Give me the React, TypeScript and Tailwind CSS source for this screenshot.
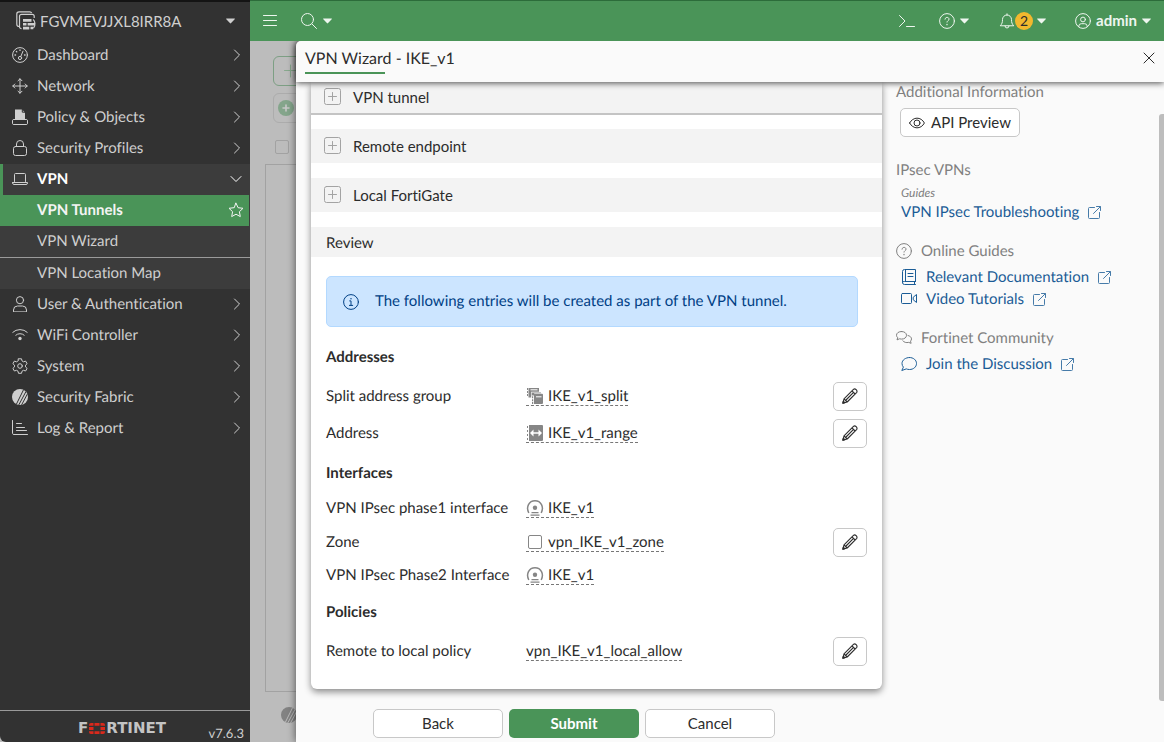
import React from "react";

type IconProps = { className?: string };

function Svg({ className = "", children, w = 16, h = 16, sw = 1 }: { className?: string; children: React.ReactNode; w?: number; h?: number; sw?: number }) {
  return (
    <svg
      aria-hidden="true"
      width={w}
      height={h}
      viewBox={`0 0 ${w} ${h}`}
      fill="none"
      stroke="currentColor"
      strokeWidth={sw}
      strokeLinecap="round"
      strokeLinejoin="round"
      className={`shrink-0 ${className}`}
    >
      {children}
    </svg>
  );
}

const DashboardIcon = () => (
  <Svg>
    <circle cx="8" cy="8" r="7.4" />
    <circle cx="8" cy="11" r="1.6" />
    <path d="M8.8 9.5 11 4.2" />
    <path d="M3 8h.6M12.5 8h.6M4.4 4.5l.4.4M8 3v.4" strokeWidth="1.3" />
  </Svg>
);
const NetworkIcon = () => (
  <Svg>
    <path d="M8 .8v14.4M.8 8h14.4M6 2.8l2-2 2 2M6 13.2l2 2 2-2M2.8 6l-2 2 2 2M13.2 6l2 2-2 2" />
  </Svg>
);
const PolicyIcon = () => (
  <Svg>
    <path d="M3 .5h7l3 3V11H3z" fill="currentColor" stroke="none" />
    <path d="M10.3 0v3.2h3" stroke="#323232" />
    <path d="M3 10.5H1.2l-.7.7v3.6l.7.7h13.6l.7-.7v-3.6l-.7-.7H13" />
  </Svg>
);
const LockIcon = () => (
  <Svg>
    <rect x="1.5" y="6.5" width="13" height="9" rx="2" />
    <path d="M4.5 6.5V4a3.5 3.5 0 0 1 7 0v2.5" />
  </Svg>
);
const LaptopIcon = () => (
  <Svg>
    <path d="M2.500 10.500v-7a1 1 0 0 1 1-1h9a1 1 0 0 1 1 1v7" />
    <path d="M.5 11.500h15v.5a1.500 1.500 0 0 1-1.500 1.500H2A1.500 1.500 0 0 1 .5 12z" />
  </Svg>
);
const UserIcon = () => (
  <Svg>
    <circle cx="8" cy="4.2" r="3.6" />
    <path d="M1.5 15.5V14a4 4 0 0 1 4-4h5a4 4 0 0 1 4 4v1.500z" />
  </Svg>
);
const WifiIcon = () => (
  <Svg>
    <path d="M.8 5.300a10.500 10.500 0 0 1 14.400 0M3.800 8.200a6.200 6.200 0 0 1 8.400 0" />
    <circle cx="8" cy="11.500" r="1.7" fill="currentColor" stroke="none" />
  </Svg>
);
const GearIcon = () => (
  <Svg>
    <path d="M6.500.8h3l.5 2.100 1.500.9 2.100-.7 1.500 2.600-1.600 1.500v1.700l1.600 1.500-1.500 2.600-2.100-.7-1.500.9-.5 2.100h-3L6 13.200l-1.500-.9-2.100.7-1.500-2.600 1.600-1.500V7.200L.9 5.700l1.500-2.600 2.100.7L6 2.900z" />
    <circle cx="8" cy="8" r="2.3" />
  </Svg>
);
const FabricIcon = ({ cut = "#323232" }: { cut?: string }) => (
  <Svg>
    <circle cx="8" cy="8" r="8" fill="currentColor" stroke="none" />
    <path d="M4.5 15 11.500.8M7 15.500 14 2.500M9.800 15.500 15.400 5" stroke={cut} />
  </Svg>
);
const ReportIcon = () => (
  <Svg>
    <path d="M.5.5v13A1.500 1.500 0 0 0 2 14.500h13.500M4.500 3.500h5M4.500 7.500h8M4.500 10.500h10" />
  </Svg>
);
const DeviceIcon = () => (
  <svg aria-hidden="true" width="20" height="20" viewBox="0 0 20 20" fill="none" stroke="currentColor" strokeWidth="1.2" className="shrink-0">
    <path d="M3 15.500A2.300 2.300 0 0 1 .8 13.200V3A2.200 2.200 0 0 1 3 .8h10.500A2.200 2.200 0 0 1 15.700 2" />
    <path d="M5.500 17.700a2 2 0 0 1-2-2V5.300a2 2 0 0 1 2-2h10.700a2 2 0 0 1 2 2V7" />
    <path d="M7 8h8.500v2.700H7zM7 11.900h3.500v2.700H7zM11.600 11.900H19v2.700h-7.400zM7 15.800h6.300v2.700H7zM14.500 15.800h2.800v2.500h-2.800z" fill="currentColor" stroke="none" />
    <path d="M17 8.500c2.200 1.500 2.800 6 .5 8.500" />
  </svg>
);
const Caret = ({ className = "" }: IconProps) => (
  <svg aria-hidden="true" width="9" height="6" viewBox="0 0 9 6" fill="currentColor" className={`shrink-0 ${className}`}>
    <path d="M.6.5h7.800c.5 0 .6.400.3.800L5.100 5.100a.8.8 0 0 1-1.200 0L.3 1.300C0 .9.1.5.6.5z" />
  </svg>
);
const ChevronRight = () => (
  <Svg w={8} h={12}>
    <path d="M1.500 1 6.500 6l-5 5" />
  </Svg>
);
const ChevronDown = () => (
  <Svg w={12} h={8}>
    <path d="M1 1.500 6 6.500l5-5" />
  </Svg>
);
const StarIcon = () => (
  <Svg>
    <path d="m8 1.200 2.100 4.500 4.900.6-3.600 3.400.9 4.900L8 12.200l-4.300 2.400.9-4.900L1 6.300l4.900-.6z" />
  </Svg>
);
const HelpIcon = () => (
  <Svg>
    <circle cx="8" cy="8" r="7.4" />
    <path d="M6 6.200c0-2.500 4-2.500 4 0 0 1.400-2 1.500-2 2.900" />
    <path d="M8 11.400v.3" strokeWidth="1.3" />
  </Svg>
);
const InfoIcon = () => (
  <Svg>
    <circle cx="8" cy="8" r="7.4" />
    <path d="M6.700 6.900H8v4.400M6.400 11.400h3.300" />
    <path d="M8 4.600v.2" strokeWidth="1.4" />
  </Svg>
);
const EyeIcon = () => (
  <Svg>
    <path d="M.6 8C4 1.500 12 1.500 15.400 8 12 14.500 4 14.500.6 8z" />
    <circle cx="8" cy="8" r="3" />
  </Svg>
);
const ExternalIcon = () => (
  <Svg w={13} h={13} className="opacity-80">
    <path d="M6.500 1.500h-5a1 1 0 0 0-1 1v9a1 1 0 0 0 1 1h9a1 1 0 0 0 1-1v-5M8.500.5h4v4M12.300.7 5.500 7.500" />
  </Svg>
);
const BookIcon = () => (
  <Svg>
    <path d="M14.500 12.500V.5h-11a2 2 0 0 0-2 2v11a2 2 0 0 0 2 2h11M14.500 12.500h-11a1.500 1.500 0 0 0-2 1M4.500.5v12M7 4.500h5M7 7.500h5M13.500 12.500v3" />
  </Svg>
);
const VideoIcon = () => (
  <Svg>
    <rect x=".5" y="2.5" width="10" height="10" rx="1" />
    <path d="m12.500 6 3-2.500v8l-3-2.500z" />
  </Svg>
);
const ChatsIcon = () => (
  <Svg>
    <path d="M5.500 1.500c3 0 5 1.600 5 3.800s-2 3.800-5 3.800c-.8 0-1.500-.1-2.100-.3L1 9.900l.7-2.200C1 7 .5 6.200.5 5.300c0-2.200 2-3.800 5-3.800z" />
    <path d="M12 5.500c2 .5 3.500 1.700 3.500 3.400 0 .9-.4 1.600-1 2.200l.6 2.200-2.400-.9c-2.400.6-4.700-.1-5.900-1.600" />
  </Svg>
);
const ChatIcon = () => (
  <Svg>
    <path d="M8.500 1.500c4 0 7 2.600 7 6s-3 6-7 6c-1.200 0-2.300-.2-3.200-.6L.8 14.500l1.600-3.400C1.500 10.100 1 8.900 1 7.500c0-3.400 3.500-6 7.500-6z" />
  </Svg>
);
const PencilIcon = () => (
  <Svg sw={1.100}>
    <path d="M.9 15.100 2 10.800 11.700 1.200c1.500-1 4 1.300 3.100 3.100L5.200 14zM2 10.800 5.200 14M10 2.900 13.100 6M4 12 11.300 4.700" />
    <path d="m.8 15.200.5-2 1.500 1.500z" fill="currentColor" />
  </Svg>
);
const PlusBoxIcon = () => (
  <Svg w={18} h={18} className="text-[#a3a3a3]">
    <rect x=".5" y=".5" width="16" height="16" rx="2" />
    <path d="M8.500 4.500v8M4.500 8.500h8" />
  </Svg>
);

function EntrySvg({ children, sw = 1 }: { children: React.ReactNode; sw?: number }) {
  return (
    <svg aria-hidden="true" width="18" height="16" viewBox="-1 0 18 16" fill="none" stroke="currentColor" strokeWidth={sw} className="shrink-0 text-[#868686]">
      {children}
    </svg>
  );
}
const GroupIcon = () => (
  <EntrySvg>
    <g fill="currentColor" stroke="none">
      <path d="M1.500 0H12v3.800H1.500zM0 0h1v2H0zM0 3h1v2H0zM0 6h1v2H0zM1.500 3h2.700v6.500H1.500zM4.800 4.500H14V5.200H7.200v2.300H4.800z" />
      <path d="M7 5.800h8a1 1 0 0 1 1 1V15a1 1 0 0 1-1 1H7zM5 8.300h1.200v2H5zM5 11.300h1.200v2H5zM5 14h1.200v2H5z" />
    </g>
    <path d="M3.500 1.800h7M9 8.800h5.500" stroke="#fff" />
  </EntrySvg>
);
const RangeIcon = () => (
  <EntrySvg>
    <path d="M2 0h13a1 1 0 0 1 1 1v14a1 1 0 0 1-1 1H2zM0 1h1v2H0zM0 5h1v2H0zM0 9h1v2H0zM0 13h1v2H0z" fill="currentColor" stroke="none" />
    <path d="m3 8 3.500-3.500v2.700h5V4.500L15 8l-3.500 3.500V8.800h-5v2.700z" fill="#fff" stroke="none" />
  </EntrySvg>
);
const TunnelIcon = () => (
  <EntrySvg sw={1.500}>
    <path d="M1.800 13C-1.300 7 2 .8 8 .8S17.300 7 14.200 13" />
    <circle cx="8" cy="7.800" r="2.200" fill="currentColor" stroke="none" />
    <path d="M4.500 12.600h7M3.500 15.200h9" strokeWidth="1.200" />
  </EntrySvg>
);
const ZoneIcon = () => (
  <EntrySvg>
    <rect x="1.500" y="1.500" width="13" height="13" rx="1.500" />
  </EntrySvg>
);

const topNav = [
  { label: "Dashboard", icon: <DashboardIcon /> },
  { label: "Network", icon: <NetworkIcon /> },
  { label: "Policy & Objects", icon: <PolicyIcon /> },
  { label: "Security Profiles", icon: <LockIcon /> },
];
const bottomNav = [
  { label: "User & Authentication", icon: <UserIcon /> },
  { label: "WiFi Controller", icon: <WifiIcon /> },
  { label: "System", icon: <GearIcon /> },
  { label: "Security Fabric", icon: <FabricIcon /> },
  { label: "Log & Report", icon: <ReportIcon /> },
];

function NavItem({ label, icon }: { label: string; icon: React.ReactNode }) {
  return (
    <a href="#" className="flex h-[31px] items-center gap-[9px] pr-[9px] pb-px pl-3">
      {icon}
      <span className="flex-1">{label}</span>
      <ChevronRight />
    </a>
  );
}

function FortinetLogo() {
  return (
    <div className="flex items-center gap-px font-['DejaVu_Sans',sans-serif] text-[15px] leading-none font-bold text-[#c4c4c4]">
      <span>F</span>
      <svg aria-hidden="true" width="16" height="11" viewBox="0 0 16 11" fill="#da291c">
        <path d="M5.500 0h5v2.800h-5zM5.500 8.200h5V11h-5zM0 4h4.500v3H0zM11.500 4H16v3h-4.500zM2 0h2.500v2.800H0V2a2 2 0 0 1 2-2zM11.500 0H14a2 2 0 0 1 2 2v.8h-4.500zM0 8.200h4.500V11H2a2 2 0 0 1-2-2zM11.500 8.200H16V9a2 2 0 0 1-2 2h-2.500z" />
      </svg>
      <span>RTINET</span>
    </div>
  );
}

function Sidebar() {
  return (
    <nav aria-label="Main" className="flex w-[250px] shrink-0 flex-col rounded-bl-md border-t-2 border-t-[#141414] bg-[#323232] text-[#cfcfcf]">
      <button type="button" className="flex h-[38px] items-center gap-1 pr-[15px] pb-px pl-4 text-left">
        <DeviceIcon />
        <span className="flex-1">FGVMEVJJXL8IRR8A</span>
        <Caret />
      </button>
      {topNav.map((n) => (
        <NavItem key={n.label} {...n} />
      ))}
      <div className="bg-[#3c3c3c]">
        <a href="#" className="flex h-[31px] items-center gap-[9px] border-l-3 border-[#4a9458] pr-2 pb-px pl-[9px] font-bold text-white">
          <span className="flex text-[#cfcfcf]">
            <LaptopIcon />
          </span>
          <span className="flex-1">VPN</span>
          <ChevronDown />
        </a>
        <a href="#" aria-current="page" className="mr-px flex h-[31px] items-center bg-[#4a9458] pr-[5px] pb-px pl-[37px] font-bold text-[#f4f4f4]">
          <span className="flex-1">VPN Tunnels</span>
          <StarIcon />
        </a>
        <a href="#" className="flex h-[31px] items-center pb-px pl-[37px]">VPN Wizard</a>
        <a href="#" className="flex h-[32px] items-center border-t border-[#9a9a9a] pb-px pl-[37px]">VPN Location Map</a>
      </div>
      {bottomNav.map((n) => (
        <NavItem key={n.label} {...n} />
      ))}
      <div className="mt-auto flex h-[32px] items-center border-t border-[#9a9a9a] pt-[3px] pr-[6px]">
        <div className="flex-1" />
        <FortinetLogo />
        <div className="flex-1 self-end text-right text-[13px] leading-[18px]">v7.6.3</div>
      </div>
    </nav>
  );
}

function TopBar() {
  return (
    <header className="flex h-[41px] shrink-0 items-center border-t border-[#2c6c3a] bg-[#4a9458] pr-[13px] pb-px pl-[13px] text-[#eef6ef]">
      <button type="button" aria-label="Toggle menu">
        <Svg w={14} h={12}>
          <path d="M.5.500h13M.5 5.500h13M.5 10.500h13" />
        </Svg>
      </button>
      <button type="button" aria-label="Search" className="ml-6 flex items-center gap-[6px]">
        <Svg>
          <circle cx="6.5" cy="6.5" r="6" />
          <path d="m11 11 4.500 4.500" />
        </Svg>
        <Caret />
      </button>
      <div className="flex-1" />
      <button type="button" aria-label="CLI console">
        <Svg>
          <path d="m.5 2.500 5.500 5.500L.5 13.500M7.500 13.500h8" />
        </Svg>
      </button>
      <button type="button" aria-label="Help" className="ml-6 flex items-center gap-[5px]">
        <HelpIcon />
        <Caret />
      </button>
      <button type="button" aria-label="Notifications" className="ml-[30px] flex items-center">
        <Svg>
          <path d="M1.500 12.500c1.500-1.500 2-3 2-6a4.500 4.500 0 0 1 9 0c0 3 .5 4.500 2 6zM6 13a2 2 0 0 0 4 0M8 .8V2" />
        </Svg>
        <span className="flex h-[18px] w-[18px] items-center justify-center rounded-full bg-[#f2b82e] text-sm text-[#2c2c2c]">2</span>
        <Caret className="ml-1" />
      </button>
      <button type="button" className="ml-[29px] flex items-center gap-[5px] font-bold">
        <Svg>
          <circle cx="8" cy="8" r="7.4" />
          <circle cx="8" cy="6.5" r="2.4" />
          <path d="M3.800 13.500V13a2.500 2.500 0 0 1 2.500-2.300h3.400a2.500 2.500 0 0 1 2.500 2.300v.5" />
        </Svg>
        <span className="pb-px">admin</span>
        <Caret />
      </button>
    </header>
  );
}

function BackgroundPage() {
  return (
    <div className="flex w-[46px] shrink-0 flex-col overflow-hidden bg-[#bcbcbc] pt-[15px]">
      <button type="button" aria-label="Create new" className="ml-[23px] flex h-[30px] w-[60px] shrink-0 items-center rounded-md border border-[#7d9f84] pl-[9px] text-[#87a88d]">
        <Svg>
          <path d="M7.500 2v12M1.500 7.500h12" />
        </Svg>
      </button>
      <button type="button" aria-label="Add filter" className="mt-[7px] ml-[23px] flex h-[30px] w-[60px] shrink-0 items-center rounded-md border border-[#acacac] pl-1 text-[#84a58b]">
        <Svg>
          <circle cx="8" cy="8" r="8" fill="currentColor" stroke="none" />
          <path d="M8 5v6M5 8h6" stroke="#c8c8c8" strokeWidth="1.6" />
        </Svg>
      </button>
      <input type="checkbox" aria-label="Select all" className="mt-[17px] ml-[25px] h-[14px] w-[14px] shrink-0 appearance-none rounded-[2px] border border-[#a2a2a2]" />
      <div className="mt-[10px] ml-[15px] w-20 flex-1 border border-[#a2a2a2]" />
      <div className="flex h-[50px] items-center pb-1 pl-[31px] text-[#828282]">
        <FabricIcon cut="#bcbcbc" />
      </div>
    </div>
  );
}

function Step({ label, done = false }: { label: string; done?: boolean }) {
  return (
    <button
      type="button"
      className={`flex w-full items-center gap-[11px] bg-[#f3f3f3] pl-[13px] text-left ${done ? "h-[33px] border-b-2 border-[#c4c4c4] pb-[2px]" : "mt-[15px] h-[34px]"}`}
    >
      <PlusBoxIcon />
      {label}
    </button>
  );
}

function Entry({ label, value, icon, editable = false }: { label: string; value: string; icon?: React.ReactNode; editable?: boolean }) {
  return (
    <div className={`flex items-center ${editable ? "h-[37px]" : "h-[30px]"}`}>
      <dt className="w-[200px] shrink-0 pb-[2px]">{label}</dt>
      <dd className="flex flex-1 items-center justify-between">
        <span className="mb-px flex items-center gap-1 border-b border-dashed border-[#777] leading-[18px]">
          {icon}
          {value}
        </span>
        {editable && (
          <button type="button" aria-label={`Edit ${label}`} className="flex h-[29px] w-[34px] items-center justify-center rounded-[5px] border border-[#c8c8c8] bg-white pb-px">
            <PencilIcon />
          </button>
        )}
      </dd>
    </div>
  );
}

function GroupHeading({ children }: { children: React.ReactNode }) {
  return <h3 className="flex h-[42px] items-center font-bold">{children}</h3>;
}

function ReviewCard() {
  return (
    <section className="rounded-b-md bg-white pb-[19px] shadow-[0_3px_7px_rgba(0,0,0,0.45)]">
      <Step label="VPN tunnel" done />
      <div className="-mt-px" />
      <Step label="Remote endpoint" />
      <Step label="Local FortiGate" />
      <h2 className="mt-[15px] flex h-[30px] items-center bg-[#f3f3f3] pt-px pl-[15px]">Review</h2>
      <div className="px-[15px]">
        <div role="status" className="mt-[19px] mr-[9px] mb-[9px] flex h-[51px] items-center gap-4 rounded-[5px] border border-[#b3d9ff] bg-[#cce5ff] pl-4 text-[#004085]">
          <InfoIcon />
          <span className="pb-px">The following entries will be created as part of the VPN tunnel.</span>
        </div>
        <GroupHeading>Addresses</GroupHeading>
        <dl>
          <Entry label="Split address group" value="IKE_v1_split" icon={<GroupIcon />} editable />
          <Entry label="Address" value="IKE_v1_range" icon={<RangeIcon />} editable />
        </dl>
        <GroupHeading>Interfaces</GroupHeading>
        <dl>
          <Entry label="VPN IPsec phase1 interface" value="IKE_v1" icon={<TunnelIcon />} />
          <Entry label="Zone" value="vpn_IKE_v1_zone" icon={<ZoneIcon />} editable />
          <Entry label="VPN IPsec Phase2 Interface" value="IKE_v1" icon={<TunnelIcon />} />
        </dl>
        <GroupHeading>Policies</GroupHeading>
        <dl>
          <Entry label="Remote to local policy" value="vpn_IKE_v1_local_allow" editable />
        </dl>
      </div>
    </section>
  );
}

function GuideLink({ icon, label }: { icon?: React.ReactNode; label: string }) {
  return (
    <a href="#" className="flex h-[22px] items-center gap-[9px] pl-[5px] text-[#1a5c96]">
      {icon}
      {label}
      <ExternalIcon />
    </a>
  );
}

function HelpPanel() {
  return (
    <aside className="flex min-w-0 flex-1 justify-between pl-[14px] text-[#808080]">
      <div className="flex flex-col items-stretch">
        <h2 className="h-5 leading-5">Additional Information</h2>
        <button type="button" className="mt-[6px] ml-1 flex h-[29px] items-center gap-[6px] self-start rounded-[5px] border border-[#c8c8c8] bg-white px-[8px] text-[#2c2c2c]">
          <EyeIcon />
          <span className="pb-[2px]">API Preview</span>
        </button>
        <h2 className="mt-[23px] h-5 leading-5">IPsec VPNs</h2>
        <div className="mt-[5px] h-4 pl-[5px] text-xs leading-4 italic">Guides</div>
        <GuideLink label="VPN IPsec Troubleshooting" />
        <h2 className="mt-[18px] mb-1 flex h-[21px] items-center gap-[9px] pb-px">
          <HelpIcon />
          Online Guides
        </h2>
        <GuideLink icon={<BookIcon />} label="Relevant Documentation" />
        <GuideLink icon={<VideoIcon />} label="Video Tutorials" />
        <h2 className="mt-[18px] mb-1 flex h-[21px] items-center gap-[9px] pb-px">
          <ChatsIcon />
          Fortinet Community
        </h2>
        <GuideLink icon={<ChatIcon />} label="Join the Discussion" />
      </div>
      <div className="mt-8 mb-[41px] w-[5px] rounded-l-[3px] bg-[#bdbdbd]" />
    </aside>
  );
}

function WizardDialog() {
  return (
    <div role="dialog" aria-labelledby="wizard-title" className="z-10 flex min-w-0 flex-1 flex-col rounded-tl-[5px] bg-[#fafafa] shadow-[0_0_8px_rgba(0,0,0,0.6)]">
      <header className="z-10 flex h-[41px] shrink-0 items-start justify-between rounded-tl-[5px] bg-[#fafafa] px-[9px] pt-[7px] shadow-[0_1px_6px_rgba(0,0,0,0.7)]">
        <div>
          <h1 id="wizard-title" className="text-base leading-[22px]">VPN Wizard - IKE_v1</h1>
          <div className="mt-[2px] h-[2px] w-20 bg-[#4a9458]" />
        </div>
        <button type="button" aria-label="Close" className="mt-1">
          <Svg w={12} h={12}>
            <path d="m1 1 10 10M11 1 1 11" />
          </Svg>
        </button>
      </header>
      <div className="flex min-h-0 flex-1">
        <main className="flex w-[586px] shrink-0 flex-col pl-[15px]">
          <ReviewCard />
          <div className="mt-5 flex justify-center gap-[6px] pr-[45px]">
            <button type="button" className="h-[29px] w-[130px] rounded-[5px] border border-[#c8c8c8] bg-white pb-[2px]">Back</button>
            <button type="button" className="h-[29px] w-[130px] rounded-[5px] bg-[#4a9458] pb-[2px] font-bold text-white">Submit</button>
            <button type="button" className="h-[29px] w-[130px] rounded-[5px] border border-[#c8c8c8] bg-white pb-[2px]">Cancel</button>
          </div>
        </main>
        <HelpPanel />
      </div>
    </div>
  );
}

export default function App() {
  return (
    <div className="flex h-screen overflow-hidden bg-[#bcbcbc] font-['Lato',sans-serif] text-[15px] leading-5 text-[#2c2c2c] [font-variant-ligatures:no-common-ligatures] [text-rendering:geometricPrecision]">
      <Sidebar />
      <div className="flex min-w-0 flex-1 flex-col">
        <TopBar />
        <div className="flex min-h-0 flex-1 overflow-hidden">
          <BackgroundPage />
          <WizardDialog />
        </div>
      </div>
    </div>
  );
}
